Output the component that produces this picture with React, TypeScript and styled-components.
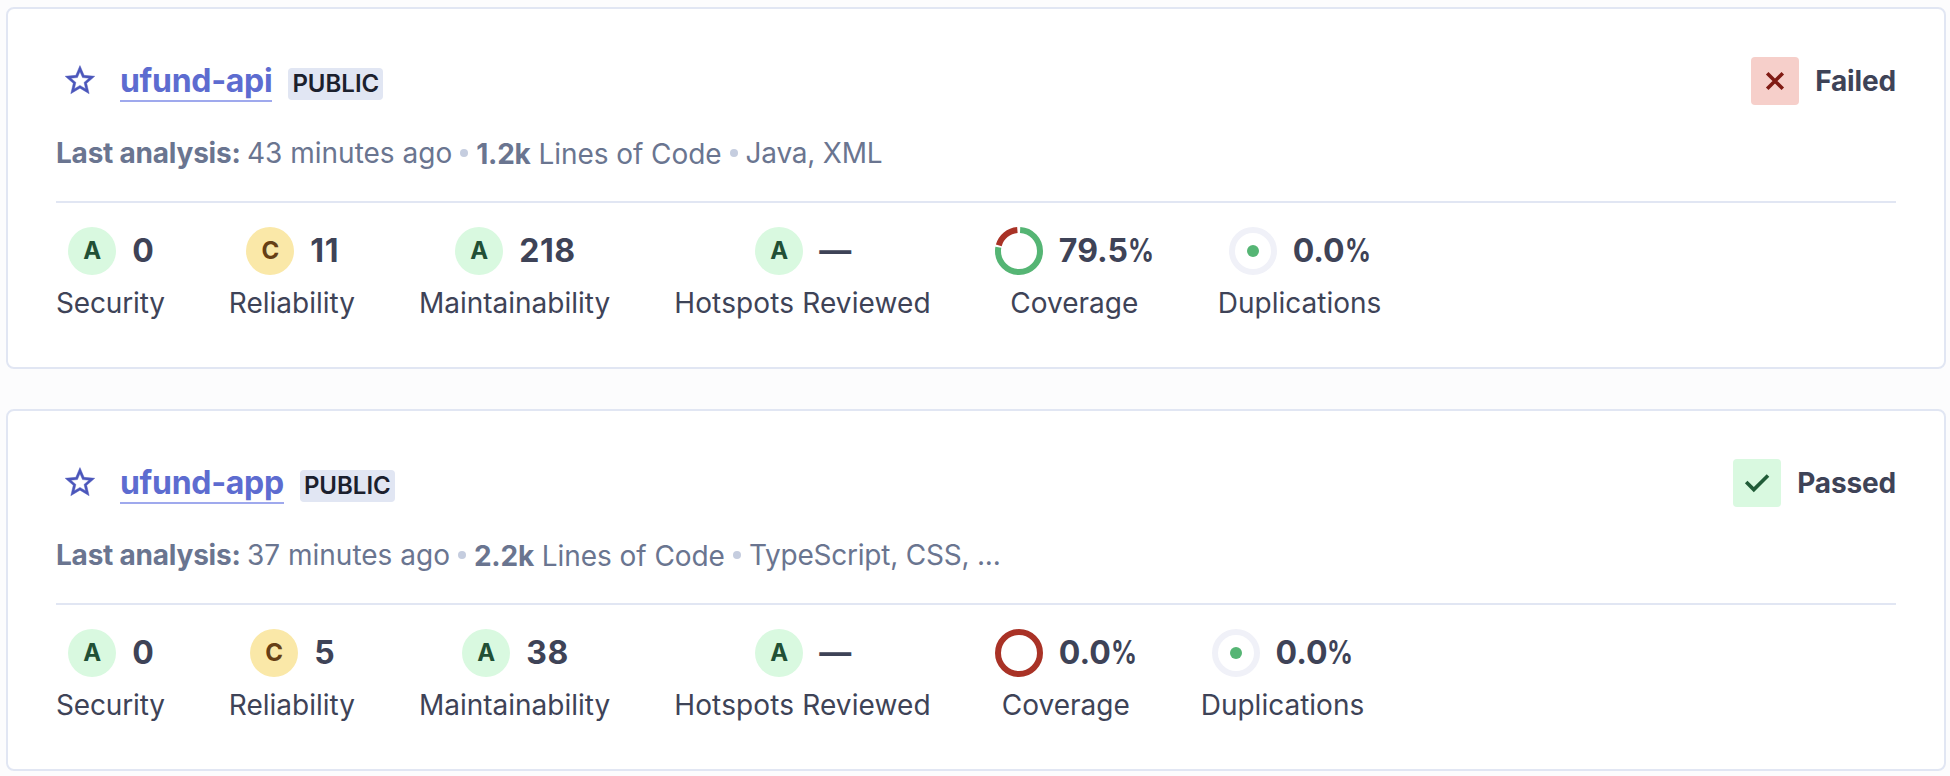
import React from "react";
import styled, { createGlobalStyle } from "styled-components";

const GlobalStyle = createGlobalStyle`
  * { box-sizing: border-box; }
  body {
    margin: 0;
    background: #fcfcfd;
    color: #3e4357;
    font-family: Inter, "Liberation Sans", sans-serif;
    font-size: 28px;
    line-height: 40px;
  }
`;

const ProjectList = styled.main`
  display: flex;
  flex-direction: column;
  gap: 40px;
  height: 776px;
  padding: 7px 4px 5px 6px;
`;

const Card = styled.article`
  display: flex;
  flex-direction: column;
  height: 362px;
  padding: 48px;
  background: #fff;
  border: 2px solid #e1e6f3;
  border-radius: 8px;
`;

const CardHeader = styled.header`
  display: flex;
  align-items: center;
  height: 48px;
`;

const FavoriteButton = styled.button`
  display: flex;
  align-items: center;
  justify-content: center;
  width: 48px;
  height: 48px;
  margin-right: 16px;
  padding: 0;
  border: 0;
  background: none;
`;

const ProjectLink = styled.a`
  height: 42px;
  padding-top: 1px;
  color: #5d6cd0;
  font-size: 32px;
  font-weight: 650;
  letter-spacing: -0.3px;
  line-height: 40px;
  text-decoration: none;
  border-bottom: 2px solid #9fa9ed;
`;

const Visibility = styled.span`
  height: 32px;
  margin: 6px 0 0 16px;
  padding: 0 4px;
  border-radius: 4px;
  background: #e1e6f3;
  color: #1b202d;
  font-size: 24px;
  font-weight: 570;
  line-height: 32px;
`;

const Gate = styled.div`
  display: flex;
  align-items: center;
  gap: 16px;
  margin-left: auto;
  font-weight: 650;
  letter-spacing: -0.15px;
`;

const GateIcon = styled.span<{ $passed: boolean }>`
  display: flex;
  width: 48px;
  height: 48px;
  border-radius: 4px;
  background: ${(p) => (p.$passed ? "#d9f9e0" : "#f6cfca")};
  color: ${(p) => (p.$passed ? "#215c38" : "#801b14")};
`;

const Meta = styled.div`
  display: flex;
  align-items: center;
  height: 40px;
  margin-top: 28px;
  color: #6a7590;
  white-space: pre;
`;

const Strong = styled.span`
  font-weight: 660;
  letter-spacing: -0.22px;
`;

const LinesOfCode = styled.span`
  padding-top: 1px;
  letter-spacing: -0.06px;
`;

const Languages = styled.span`
  letter-spacing: -0.22px;
`;

const Dot = styled.span`
  width: 8px;
  height: 8px;
  margin: 0 8px;
  border-radius: 50%;
  background: #c5cddf;
`;

const Divider = styled.hr`
  width: 100%;
  height: 2px;
  margin: 28px 0 24px;
  border: 0;
  background: #e1e6f3;
  flex: none;
`;

const Metrics = styled.div`
  display: flex;
  gap: 64px;
`;

const Metric = styled.div<{ $tracking?: number }>`
  display: flex;
  flex-direction: column;
  align-items: center;
  gap: 8px;
  letter-spacing: ${(p) => p.$tracking ?? 0}px;
`;

const MetricValue = styled.div`
  display: flex;
  align-items: center;
  gap: 16px;
  height: 48px;
  font-size: 32px;
  font-weight: 660;
  letter-spacing: 0;
`;

const Count = styled.span`
  margin-right: -1.8px;
  letter-spacing: 0.6px;
`;

const PercentSign = styled.span`
  display: inline-block;
  margin-right: -6.6px;
  transform: scaleX(0.8);
  transform-origin: left;
`;

const Rating = styled.span<{ $grade: Grade }>`
  display: flex;
  align-items: center;
  justify-content: center;
  width: 48px;
  height: 48px;
  border-radius: 50%;
  background: ${(p) => (p.$grade === "A" ? "#d9f9e0" : "#fae8a8")};
  color: ${(p) => (p.$grade === "A" ? "#215035" : "#663f15")};
  font-size: 24px;
  font-weight: 660;
`;

type Grade = "A" | "C";

interface Project {
  name: string;
  passed: boolean;
  analyzed: string;
  lines: string;
  languages: string;
  ratings: { grade: Grade; value: string; label: string }[];
  coverage: number;
  duplications: number;
}

const labelTracking: Record<string, number> = {
  Security: -0.16,
  "Hotspots Reviewed": 0.13,
};

const projects: Project[] = [
  {
    name: "ufund-api",
    passed: false,
    analyzed: "43 minutes ago",
    lines: "1.2k",
    languages: "Java, XML",
    ratings: [
      { grade: "A", value: "0", label: "Security" },
      { grade: "C", value: "11", label: "Reliability" },
      { grade: "A", value: "218", label: "Maintainability" },
      { grade: "A", value: "—", label: "Hotspots Reviewed" },
    ],
    coverage: 79.5,
    duplications: 0,
  },
  {
    name: "ufund-app",
    passed: true,
    analyzed: "37 minutes ago",
    lines: "2.2k",
    languages: "TypeScript, CSS, ...",
    ratings: [
      { grade: "A", value: "0", label: "Security" },
      { grade: "C", value: "5", label: "Reliability" },
      { grade: "A", value: "38", label: "Maintainability" },
      { grade: "A", value: "—", label: "Hotspots Reviewed" },
    ],
    coverage: 0,
    duplications: 0,
  },
];

const StarIcon = () => (
  <svg width="48" height="48" viewBox="0 0 48 48" fill="#4b56bb" stroke="#4b56bb" strokeWidth="0.3">
    <path
      transform="translate(6.2 5.6) scale(1.48)"
      d="M22 9.24l-7.19-.62L12 2 9.19 8.63 2 9.24l5.46 4.73L5.82 21 12 17.27 18.18 21l-1.63-7.03L22 9.24zM12 15.4l-3.76 2.27 1-4.28-3.32-2.88 4.38-.38L12 6.1l1.71 4.04 4.38.38-3.32 2.88 1 4.28L12 15.4z"
    />
  </svg>
);

const GateMark = ({ passed }: { passed: boolean }) => (
  <svg width="48" height="48" viewBox="0 0 48 48" fill="none" stroke="currentColor" strokeWidth="3.6">
    <path d={passed ? "M13.2 23 20.8 30.6 35 16.4" : "M16.2 16.2 31.8 31.8M31.8 16.2 16.2 31.8"} />
  </svg>
);

const CoverageRing = ({ value }: { value: number }) => {
  const ring = { cx: 24, cy: 24, r: 21, fill: "none", strokeWidth: 6, pathLength: 100 };
  if (value === 0) {
    return (
      <svg width="48" height="48">
        <circle {...ring} stroke="#a93226" />
      </svg>
    );
  }
  return (
    <svg width="48" height="48">
      <g transform="rotate(-90 24 24)">
        <circle {...ring} stroke="#55b574" strokeDasharray={`${value - 2.5} 100`} strokeDashoffset={-0.9} />
        <circle {...ring} stroke="#a93226" strokeDasharray={`${100 - value - 1.2} 100`} strokeDashoffset={-value + 0.1} />
      </g>
    </svg>
  );
};

const DuplicationsRing = () => (
  <svg width="48" height="48">
    <circle cx="24" cy="24" r="21" fill="none" stroke="#f0f1f8" strokeWidth="6" />
    <circle cx="24" cy="24" r="6" fill="#55b574" />
  </svg>
);

const Percentage = ({ value }: { value: number }) => (
  <span>
    {value.toFixed(1)}
    <PercentSign>%</PercentSign>
  </span>
);

const ProjectCard = ({ project }: { project: Project }) => (
  <Card>
    <CardHeader>
      <FavoriteButton aria-label="Favorite">
        <StarIcon />
      </FavoriteButton>
      <ProjectLink>{project.name}</ProjectLink>
      <Visibility>PUBLIC</Visibility>
      <Gate>
        <GateIcon $passed={project.passed}>
          <GateMark passed={project.passed} />
        </GateIcon>
        {project.passed ? "Passed" : "Failed"}
      </Gate>
    </CardHeader>
    <Meta>
      <span>
        <Strong>Last analysis: </Strong>
        {project.analyzed}
      </span>
      <Dot />
      <LinesOfCode>
        <Strong>{project.lines}</Strong> Lines of Code
      </LinesOfCode>
      <Dot />
      <Languages>{project.languages}</Languages>
    </Meta>
    <Divider />
    <Metrics>
      {project.ratings.map((r) => (
        <Metric key={r.label} $tracking={labelTracking[r.label]}>
          <MetricValue>
            <Rating $grade={r.grade}>{r.grade}</Rating>
            <Count>{r.value}</Count>
          </MetricValue>
          {r.label}
        </Metric>
      ))}
      <Metric>
        <MetricValue>
          <CoverageRing value={project.coverage} />
          <Percentage value={project.coverage} />
        </MetricValue>
        Coverage
      </Metric>
      <Metric>
        <MetricValue>
          <DuplicationsRing />
          <Percentage value={project.duplications} />
        </MetricValue>
        Duplications
      </Metric>
    </Metrics>
  </Card>
);

export default function App() {
  return (
    <>
      <GlobalStyle />
      <ProjectList>
        {projects.map((p) => (
          <ProjectCard key={p.name} project={p} />
        ))}
      </ProjectList>
    </>
  );
}
